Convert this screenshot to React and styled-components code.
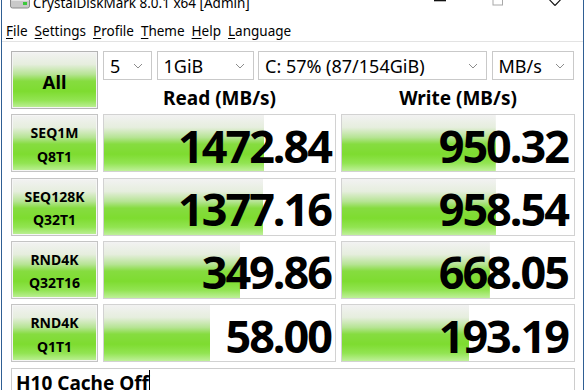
import styled, { createGlobalStyle } from "styled-components";

const GlobalStyle = createGlobalStyle`
  html, body {
    margin: 0;
    padding: 0;
    background: #ffffff;
    overflow: hidden;
  }
  body {
    font-family: "Noto Sans", "Open Sans", sans-serif;
    color: #000;
  }
`;

const tests = [
  { name: "SEQ1M", sub: "Q8T1", read: 1472.84, write: 950.32 },
  { name: "SEQ128K", sub: "Q32T1", read: 1377.16, write: 958.54 },
  { name: "RND4K", sub: "Q32T16", read: 349.86, write: 668.05 },
  { name: "RND4K", sub: "Q1T1", read: 58.0, write: 193.19 },
];

const menus = ["File", "Settings", "Profile", "Theme", "Help", "Language"];

const combos = [
  { value: "5", width: 49 },
  { value: "1GiB", width: 97 },
  { value: "C: 57% (87/154GiB)", width: 229 },
  { value: "MB/s", width: 82 },
];

// CrystalDiskMark meter is log scale: log10(score * 10) / 6
const meter = (v) => Math.max(0, Math.min(100, ((1 + Math.log10(v)) / 6) * 100));

const greenGradient = `linear-gradient(
  to bottom,
  #f2f2f2 0%,
  #e6eede 22%,
  #b6e494 40%,
  #86dc40 52%,
  #7edc30 70%,
  #92e452 86%,
  #bff09a 100%
)`;

const Window = styled.div`
  width: 581px;
  height: 390px;
  margin-left: 1px;
  border-left: 1px solid #2f5f93;
  border-right: 1px solid #2f5f93;
  display: flex;
  flex-direction: column;
  overflow: hidden;
`;

const TitleBar = styled.div`
  flex: none;
  height: 21px;
  display: flex;
  align-items: flex-start;
  overflow: hidden;
`;

const AppIcon = styled.svg`
  margin: 0 0 0 8px;
  flex: none;
`;

const Title = styled.div`
  margin: -5px 0 0 3px;
  font-size: 13.5px;
  line-height: 16px;
  white-space: nowrap;
  flex: 1;
`;

const CaptionButton = styled.div`
  width: 57px;
  height: 21px;
  flex: none;
`;

const MenuBar = styled.div`
  flex: none;
  height: 20px;
  display: flex;
  align-items: center;
  padding-left: 4px;
  gap: 7px;
  border-bottom: 1px solid #e3e3e3;
`;

const MenuItem = styled.span`
  font-size: 13.5px;
  line-height: 18px;
  white-space: nowrap;
  &::first-letter {
    text-decoration: underline;
    text-underline-offset: 2px;
  }
`;

const Main = styled.div`
  flex: none;
  padding: 9px 0 0 9px;
  display: flex;
  flex-direction: column;
  gap: 5.33px;
`;

const TopSection = styled.div`
  flex: none;
  display: grid;
  grid-template-columns: 87px 472px;
  column-gap: 5px;
  height: 58px;
`;

const AllButton = styled.div`
  box-sizing: border-box;
  height: 58px;
  border: 1px solid #b4b4b4;
  box-shadow: inset 0 0 0 1px #f4f4f4;
  background: ${greenGradient};
  display: flex;
  align-items: center;
  justify-content: center;
  font-weight: 700;
  font-size: 18.5px;
  padding-top: 3px;
`;

const TopRight = styled.div`
  display: flex;
  flex-direction: column;
`;

const ComboRow = styled.div`
  flex: none;
  display: flex;
  gap: 4.5px;
  height: 29px;
`;

const Combo = styled.div`
  box-sizing: border-box;
  flex: none;
  height: 29px;
  width: ${(p) => p.$width}px;
  border: 1px solid #c9c9c9;
  background: #fff;
  display: flex;
  align-items: center;
  justify-content: space-between;
  padding: 0 8px 0 6px;
  font-size: 18px;
  white-space: nowrap;
`;

const HeaderRow = styled.div`
  flex: none;
  display: grid;
  grid-template-columns: 233px 234px;
  column-gap: 5px;
  height: 29px;
`;

const Header = styled.div`
  display: flex;
  align-items: center;
  justify-content: center;
  font-weight: 700;
  font-size: 19px;
  padding-top: 5px;
`;

const Row = styled.div`
  flex: none;
  display: grid;
  grid-template-columns: 87px 233px 234px;
  column-gap: 5px;
  height: 58px;
`;

const TestLabel = styled.div`
  box-sizing: border-box;
  border: 1px solid #c4c4c4;
  box-shadow: inset 0 0 0 1px #f6f6f6;
  background: ${greenGradient};
  display: flex;
  flex-direction: column;
  align-items: center;
  justify-content: center;
  font-weight: 700;
  font-size: 14px;
  line-height: 23.4px;
  padding-top: 3px;
`;

const ValueBox = styled.div`
  box-sizing: border-box;
  border: 1px solid #d2d2d2;
  background-color: #fff;
  background-image: ${greenGradient};
  background-repeat: no-repeat;
  display: flex;
  align-items: center;
  justify-content: flex-end;
  padding: 4px ${(p) => p.$pad}px 0 0;
  font-weight: 700;
  font-size: 45px;
  line-height: 1;
  letter-spacing: -2px;
`;

const Comment = styled.div`
  flex: none;
  box-sizing: border-box;
  width: 564px;
  height: 40px;
  border: 1px solid #cdcdcd;
  padding: 1px 0 0 4px;
  display: flex;
  align-items: flex-start;
  font-weight: 700;
  font-size: 19px;
  line-height: 26px;
`;

const Caret = styled.span`
  display: inline-block;
  width: 1px;
  height: 24px;
  background: #000;
  margin-left: 0;
`;

const Chevron = () => (
  <svg width="10" height="6" viewBox="0 0 10 6">
    <polyline points="1,1 5,5 9,1" fill="none" stroke="#8c8c8c" strokeWidth="1" />
  </svg>
);

function ValueCell({ value, pad }) {
  return (
    <ValueBox $pad={pad} style={{ backgroundSize: `${meter(value)}% 100%` }}>
      {value.toFixed(2)}
    </ValueBox>
  );
}

export default function App() {
  return (
    <>
      <GlobalStyle />
      <Window>
        <TitleBar>
          <AppIcon width="20" height="9" viewBox="0 0 20 9">
            <rect x="0.5" y="-6" width="19" height="14" rx="2" fill="#c9c9c9" stroke="#8a8a8a" />
            <rect x="1.5" y="-5" width="17" height="6" fill="#e4e4e4" />
            <rect x="13" y="2" width="4" height="3" fill="#3cc83c" />
          </AppIcon>
          <Title>CrystalDiskMark 8.0.1 x64 [Admin]</Title>
          <CaptionButton>
            <svg width="57" height="21" viewBox="0 0 57 21">
              <rect x="22" y="0" width="12" height="1.3" fill="#111" />
            </svg>
          </CaptionButton>
          <CaptionButton>
            <svg width="57" height="21" viewBox="0 0 57 21">
              <rect x="24" y="-6" width="9.5" height="11" fill="none" stroke="#a8a8a8" />
            </svg>
          </CaptionButton>
          <CaptionButton>
            <svg width="57" height="21" viewBox="0 0 57 21">
              <path d="M18 -6 L29 5.5 M40 -6 L29 5.5" fill="none" stroke="#111" strokeWidth="1.1" />
            </svg>
          </CaptionButton>
        </TitleBar>
        <MenuBar>
          {menus.map((m) => (
            <MenuItem key={m}>{m}</MenuItem>
          ))}
        </MenuBar>
        <Main>
          <TopSection>
            <AllButton>All</AllButton>
            <TopRight>
              <ComboRow>
                {combos.map((c) => (
                  <Combo key={c.value} $width={c.width}>
                    <span>{c.value}</span>
                    <Chevron />
                  </Combo>
                ))}
              </ComboRow>
              <HeaderRow>
                <Header>Read (MB/s)</Header>
                <Header>Write (MB/s)</Header>
              </HeaderRow>
            </TopRight>
          </TopSection>
          {tests.map((t) => (
            <Row key={t.name + t.sub}>
              <TestLabel>
                <span>{t.name}</span>
                <span>{t.sub}</span>
              </TestLabel>
              <ValueCell value={t.read} pad={4} />
              <ValueCell value={t.write} pad={6} />
            </Row>
          ))}
          <Comment>
            H10 Cache Off
            <Caret />
          </Comment>
        </Main>
      </Window>
    </>
  );
}
